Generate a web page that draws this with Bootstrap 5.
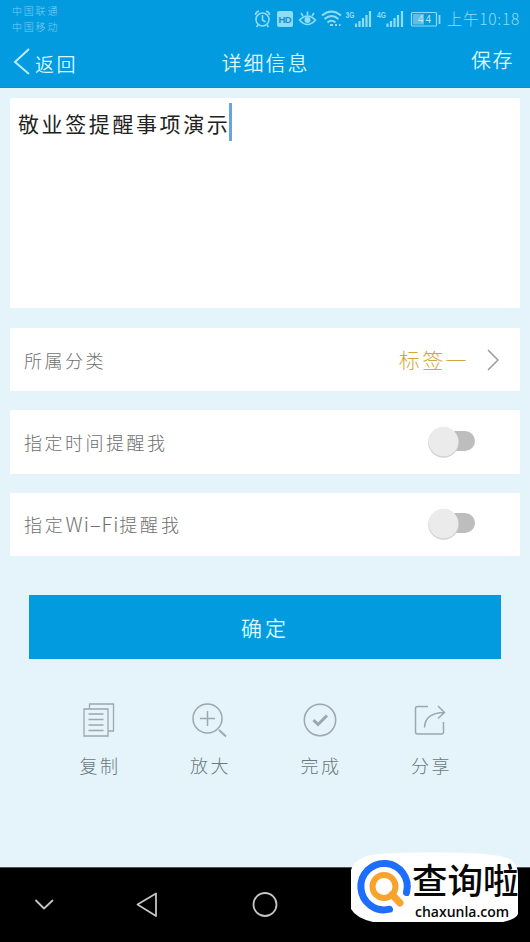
<!DOCTYPE html>
<html lang="zh-CN">
<head>
<meta charset="utf-8">
<meta name="viewport" content="width=device-width, initial-scale=1">
<title>详细信息</title>
<link href="https://cdn.jsdelivr.net/npm/bootstrap@5.3.0/dist/css/bootstrap.min.css" rel="stylesheet">
<style>
body{font-family:"Noto Sans CJK SC",sans-serif;font-weight:300;background:#e4f4fa;width:530px;height:942px;overflow:hidden;line-height:1}
svg{display:block;flex:none}
.topbar{background:#039bdf;height:88px;border-bottom:1px solid #168cc4;color:#d9f8ff}
.status{height:36px;padding:0 10px 0 12px;color:#8fdcf8}
.carriers{font-size:10px;letter-spacing:1.8px;line-height:16px;padding-top:3px;color:#77cff3}
.indicators{padding-top:1px}
.clock{font-size:15.5px;letter-spacing:.75px;padding-left:6px}
.titlebar{height:51px;padding:0 16px 0 13px;display:grid;grid-template-columns:1fr auto 1fr;font-size:20px;font-weight:350}
.titlebar .back-text{letter-spacing:2.5px;font-size:19px;padding-top:3px}
.titlebar .heading{letter-spacing:2px;padding-top:3px}
.titlebar .save{letter-spacing:1.5px}
.panel{background:#fff;border:0;border-radius:0;margin:19px 10px 0}
.note{height:210px;margin-top:10px;padding:5px 8px;font-size:21px;letter-spacing:2.6px;color:#222;font-weight:400}
.note-text{padding-top:10px}
.note+.panel{margin-top:20px}
.caret{width:3px;height:38px;background:#6ba3dc;margin-left:-1px}
.option{height:63.3px;padding:0 21px 0 14px;font-size:18px;letter-spacing:2.5px;color:#6f6f6f}
.option.toggle{padding-right:45px}
.wifi{letter-spacing:1px;font-size:20px}
.wifi-label{letter-spacing:2.8px}
.tagname{color:#d3a73a;font-size:21px;letter-spacing:2.4px;margin-right:18px}
.toggle-track{width:47px;height:32px}
.confirm{background:#039bdf;height:64px;margin:39.5px 29px 0;border:0;border-radius:0;color:#d9f8ff;font-size:21px;letter-spacing:3px;font-weight:350}
.tools{margin:42px 44.5px 0 43.5px}
.tools .tool{font-size:18px;letter-spacing:2.5px;color:#6c777b;gap:17px}
.tools .tool span{margin-right:-2.5px}
.sysbar{height:75px;background:#000;border-top:1px solid #555}
.brand{left:340px;top:848px;width:190px;height:80px}
.brand-name{font-size:35.5px;line-height:36px;font-weight:500;left:72px;top:13px;color:#080808;white-space:nowrap}
.brand-url{font-family:"Open Sans","Noto Sans",sans-serif;font-weight:600;font-size:14px;line-height:14px;left:75px;top:57px;color:#080808}
</style>
</head>
<body class="position-relative d-flex flex-column">
<header class="topbar flex-shrink-0">
  <div class="status d-flex justify-content-between">
    <div class="carriers"><div>中国联通</div><div>中国移动</div></div>
    <div class="indicators d-flex align-items-center">
      <svg width="188" height="24" viewBox="253 6 188 24" fill="none" stroke="#8fdcf8" stroke-width="1.6">
        <circle cx="262.500" cy="18.500" r="6.500"/><path d="M262.500 14v5l3 2M255.500 14q0-3 3.500-4M269.500 14q0-3-3.500-4M258 24l-1.500 2M267 24l1.500 2"/>
        <rect x="277" y="10" width="16" height="16" rx="2" fill="#8fdcf8" stroke="none"/>
        <text x="278.500" y="22" font-family="Liberation Sans,sans-serif" font-size="9.500" font-weight="700" fill="#168fc7" stroke="none" textLength="13">HD</text>
        <path d="M299.500 19q8-8 16 0q-8 9-16 0ZM307.500 10.500v3.500M301 12l2 3M314 12l-2 3"/><circle cx="307.500" cy="19" r="3" fill="#8fdcf8" stroke="none"/>
        <path d="M322 14.500q9.500-8 19 0M324.500 18q7-6 14 0M327.500 21.500q4-3.500 8 0" stroke-width="2"/><path d="M330 24h3M335 24h2M339 24h1.500" stroke-width="2"/>
        <g fill="#8fdcf8" stroke="none" font-family="Liberation Sans,sans-serif" font-size="8.500" font-weight="700">
          <text x="345.500" y="16.500" textLength="9" lengthAdjust="spacingAndGlyphs">3G</text><text x="377" y="16.500" textLength="9" lengthAdjust="spacingAndGlyphs">4G</text>
        </g>
        <path d="M356 26v-3.500M359.500 26v-6M363 26v-9M366.500 26v-12M370 26v-16M387.500 26v-3.500M391 26v-6M394.500 26v-9M398 26v-12M402 26v-16" stroke-width="2.200"/>
        <rect x="411.500" y="11.500" width="25" height="13.500" rx="1" stroke-width="1.200"/><rect x="413" y="13" width="11" height="10.500" fill="#62bce5" stroke="none"/><path d="M439.500 14v9" stroke-width="1.800"/>
        <text x="418" y="22" font-family="Liberation Sans,sans-serif" font-size="10" fill="#b4eafc" stroke="none" textLength="13">44</text>
      </svg>
      <span class="clock text-nowrap">上午10:18</span>
    </div>
  </div>
  <div class="titlebar align-items-center">
    <div class="d-flex align-items-center">
      <svg width="18" height="28" viewBox="0 0 18 28" fill="none" stroke="#b8ecfc" stroke-width="2"><path d="M16 1 2 14l14 12"/></svg>
      <span class="back-text ms-1">返回</span>
    </div>
    <span class="heading ps-1">详细信息</span>
    <span class="save text-end pb-1">保存</span>
  </div>
</header>
<main class="flex-grow-1 d-flex flex-column">
  <section class="panel note d-flex align-items-start"><span class="note-text">敬业签提醒事项演示</span><i class="caret"></i></section>
  <section class="panel option d-flex align-items-center justify-content-between"><span>所属分类</span>
    <span class="d-flex align-items-center"><span class="tagname">标签一</span><svg width="12" height="22" viewBox="0 0 12 22" fill="none" stroke="#999" stroke-width="1.500"><path d="m1 1 10 10L1 21"/></svg></span></section>
  <section class="panel option toggle d-flex align-items-center justify-content-between"><span>指定时间提醒我</span>
    <svg class="toggle-track" viewBox="0 0 47 32"><rect x="17" y="5" width="30" height="20" rx="10" fill="#bdbdbd"/><circle cx="15.500" cy="16.500" r="15.300" fill="#d2d2d2"/><circle cx="15.500" cy="15.500" r="14.800" fill="#ebebeb"/></svg></section>
  <section class="panel option toggle d-flex align-items-center justify-content-between"><span class="wifi-label">指定<span class="wifi">Wi–Fi</span>提醒我</span>
    <svg class="toggle-track" viewBox="0 0 47 32"><rect x="17" y="5" width="30" height="20" rx="10" fill="#bdbdbd"/><circle cx="15.500" cy="16.500" r="15.300" fill="#d2d2d2"/><circle cx="15.500" cy="15.500" r="14.800" fill="#ebebeb"/></svg></section>
  <button class="confirm flex-shrink-0" type="button">确定</button>
  <div class="tools row g-0 text-center">
    <div class="col tool d-flex flex-column align-items-center"><svg width="38" height="38" viewBox="0 0 38 38" fill="none" stroke="#9ba8ad" stroke-width="1.300"><path d="M9.500 8V3h24v27h-5M4 8h24v27H4ZM8.500 13h15M8.500 18.500h15M8.500 24h15M8.500 29.500h15"/></svg><span>复制</span></div>
    <div class="col tool d-flex flex-column align-items-center"><svg width="38" height="38" viewBox="0 0 38 38" fill="none" stroke="#9ba8ad" stroke-width="1.500"><circle cx="17.500" cy="17.500" r="14.500"/><path d="M10 17.500h15M17.500 10v15"/><path d="m29 29 7 6.500" stroke-width="2"/></svg><span>放大</span></div>
    <div class="col tool d-flex flex-column align-items-center"><svg width="38" height="38" viewBox="0 0 38 38" fill="none" stroke="#9ba8ad" stroke-width="1.500"><circle cx="19" cy="19" r="15.700"/><path d="m12.500 19 4.500 4.500 9-9" stroke-width="3"/></svg><span>完成</span></div>
    <div class="col tool d-flex flex-column align-items-center"><svg width="38" height="38" viewBox="0 0 38 38" fill="none" stroke="#9ba8ad" stroke-width="1.500"><path d="M17 5.500H6.500q-2 0-2 2V31q0 2 2 2h24q2 0 2-2V21M13.500 26.500Q14 12 33 11.500M27 5l6.500 6.500-6.500 6"/></svg><span>分享</span></div>
  </div>
</main>
<footer class="sysbar flex-shrink-0">
  <svg width="330" height="74" viewBox="0 868 330 74" fill="none" stroke="#c4c4c4" stroke-width="1.800" stroke-linecap="round" stroke-linejoin="round"><path d="m36 900.500 8 8 8.500-8M156 893.500v22.500l-18.500-11.500Z"/><circle cx="265" cy="904.500" r="11.500"/></svg>
</footer>
<div class="brand position-absolute">
  <svg width="190" height="80" viewBox="340 848 190 80" fill="none">
    <path d="M351 870Q354 859 371 855Q390 852 435 852.500Q500 852 511 860Q518 864 518 875V914Q516 919 503 922H373Q356 918 351 909Z" fill="#fff"/>
    <path d="M406.500 892.500A23.200 23.200 0 1 0 389.500 909.200" stroke="#1f6dfb" stroke-width="7" stroke-linecap="round"/>
    <circle cx="384" cy="886.500" r="11.500" stroke="#f7a32d" stroke-width="6"/><path d="m392 894.500 8 8.500" stroke="#f7a32d" stroke-width="7" stroke-linecap="round"/>
  </svg>
  <div class="brand-name position-absolute">查询啦</div>
  <div class="brand-url position-absolute">chaxunla.com</div>
</div>
<script src="https://cdn.jsdelivr.net/npm/bootstrap@5.3.0/dist/js/bootstrap.bundle.min.js"></script>
</body>
</html>
